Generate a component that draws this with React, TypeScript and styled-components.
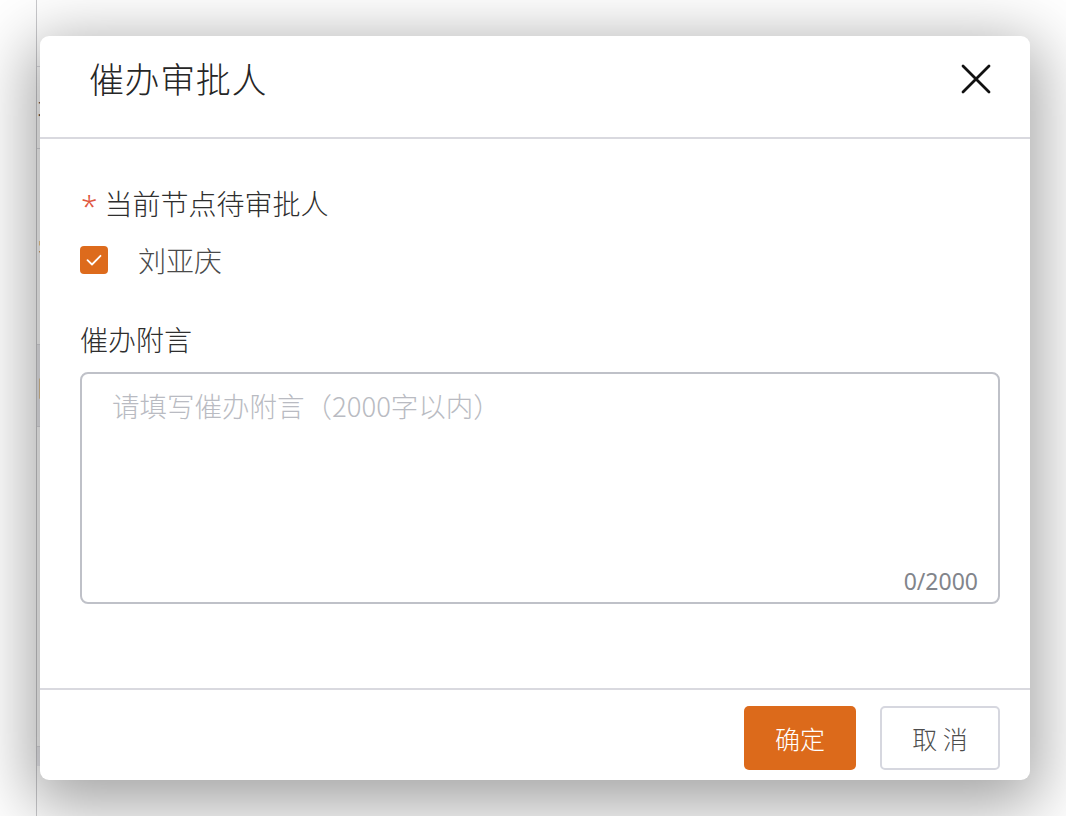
import React from "react";
import styled, { createGlobalStyle } from "styled-components";

const GlobalStyle = createGlobalStyle`
  html, body {
    margin: 0;
    padding: 0;
    background: #ffffff;
  }
  body {
    font-family: "Noto Sans CJK SC", "Noto Sans", sans-serif;
  }
  * { box-sizing: border-box; }
`;

const Page = styled.div`
  position: relative;
  width: 1066px;
  height: 816px;
  overflow: hidden;
  background: #ffffff;
  padding-left: 36px;
`;

const BgTable = styled.div`
  display: flex;
  flex-direction: column;
  width: 30px;
  border-left: 1px solid #c9c9cc;
  height: 100%;
  padding-top: 66px;
`;

const BgRow = styled.div<{ $h: number; $shade?: boolean }>`
  height: ${(p) => p.$h}px;
  border-top: 1px solid #dcdce0;
  background: ${(p) => (p.$shade ? "#ececf0" : "#ffffff")};
  color: #555;
  font-size: 22px;
  padding-left: 1px;
  display: flex;
  align-items: center;
  white-space: nowrap;
  overflow: hidden;
`;

const Modal = styled.div`
  position: absolute;
  left: 40px;
  top: 36px;
  width: 990px;
  height: 744px;
  background: #ffffff;
  border-radius: 9px;
  box-shadow: 0 16px 64px 10px rgba(0, 0, 0, 0.36);
  display: flex;
  flex-direction: column;
`;

const Header = styled.div`
  height: 103px;
  flex: none;
  display: flex;
  align-items: center;
  justify-content: space-between;
  padding: 0 38px 18px 49px;
  border-bottom: 2px solid #d9d9df;
`;

const Title = styled.h1`
  margin: 0;
  font-size: 35px;
  font-weight: 300;
  line-height: 44px;
  color: #262626;
  letter-spacing: 0.6px;
`;

const CloseButton = styled.button`
  width: 32px;
  height: 32px;
  padding: 0;
  border: none;
  background: transparent;
  display: flex;
  align-items: center;
  justify-content: center;
  margin-top: 2px;
  cursor: pointer;
`;

const Body = styled.div`
  flex: 1;
  display: flex;
  flex-direction: column;
  padding: 46px 30px 0 40px;
`;

const Label = styled.div<{ $gap?: number }>`
  font-size: 28px;
  font-weight: 300;
  line-height: 36px;
  color: #2e2e2e;
  margin-top: ${(p) => p.$gap ?? 0}px;
  display: flex;
  align-items: center;
`;

const Required = styled.span`
  color: #e0573f;
  margin-right: 7px;
  margin-left: 1px;
  font-family: "Noto Sans", sans-serif;
  font-size: 30px;
  font-weight: 300;
  position: relative;
  top: 3px;
`;

const CheckRow = styled.label`
  display: flex;
  align-items: center;
  height: 36px;
  margin-top: 21px;
  gap: 30px;
`;

const CheckBox = styled.span`
  width: 28px;
  height: 28px;
  border-radius: 4px;
  background: #dd6b1c;
  display: flex;
  align-items: center;
  justify-content: center;
`;

const CheckText = styled.span`
  font-size: 28px;
  font-weight: 300;
  line-height: 36px;
  color: #4a4a4a;
`;

const TextBox = styled.div`
  position: relative;
  margin-top: 15px;
  height: 232px;
  border: 2px solid #bfc1c8;
  border-radius: 8px;
  padding: 13px 30px;
`;

const Placeholder = styled.div`
  font-size: 27.5px;
  font-weight: 300;
  line-height: 36px;
  color: #b9bbc2;
`;

const Counter = styled.span`
  position: absolute;
  right: 20px;
  bottom: 6px;
  font-family: "Noto Sans", sans-serif;
  font-size: 23px;
  line-height: 30px;
  color: #82858b;
`;

const Footer = styled.div`
  flex: none;
  border-top: 2px solid #d9d9df;
  display: flex;
  justify-content: flex-end;
  gap: 24px;
  padding: 16px 30px 10px 40px;
`;

const Button = styled.button<{ $primary?: boolean }>`
  height: 64px;
  width: ${(p) => (p.$primary ? 112 : 120)}px;
  border-radius: 5px;
  font-family: "Noto Sans CJK SC", sans-serif;
  font-size: 25px;
  font-weight: 300;
  border: ${(p) => (p.$primary ? "none" : "2px solid #d6d7df")};
  background: ${(p) => (p.$primary ? "#dc6a1b" : "#ffffff")};
  color: ${(p) => (p.$primary ? "#ffffff" : "#4d4d4d")};
  display: flex;
  align-items: center;
  justify-content: center;
  padding: 0;
  cursor: pointer;
  white-space: pre;
`;

export default function App() {
  return (
    <>
      <GlobalStyle />
      <Page>
        <BgTable>
          <BgRow $h={82}>项</BgRow>
          <BgRow $h={196}>字</BgRow>
          <BgRow $h={82} $shade>附</BgRow>
          <BgRow $h={320} />
          <BgRow $h={20} $shade />
        </BgTable>
        <Modal>
          <Header>
            <Title>催办审批人</Title>
            <CloseButton aria-label="关闭">
              <svg width="30" height="30" viewBox="0 0 30 30">
                <path
                  d="M2 2 L28 28 M28 2 L2 28"
                  stroke="#111"
                  strokeWidth="2.8"
                  strokeLinecap="round"
                  fill="none"
                />
              </svg>
            </CloseButton>
          </Header>
          <Body>
            <Label>
              <Required>*</Required>当前节点待审批人
            </Label>
            <CheckRow>
              <CheckBox>
                <svg width="16" height="12" viewBox="0 0 16 12">
                  <path
                    d="M1.5 6.2 L6 10.5 L14.5 1.8"
                    stroke="#fff"
                    strokeWidth="1.8"
                    fill="none"
                    strokeLinecap="round"
                    strokeLinejoin="round"
                  />
                </svg>
              </CheckBox>
              <CheckText>刘亚庆</CheckText>
            </CheckRow>
            <Label $gap={43}>催办附言</Label>
            <TextBox>
              <Placeholder>请填写催办附言（2000字以内）</Placeholder>
              <Counter>0/2000</Counter>
            </TextBox>
          </Body>
          <Footer>
            <Button $primary>确定</Button>
            <Button>{"取 消"}</Button>
          </Footer>
        </Modal>
      </Page>
    </>
  );
}
